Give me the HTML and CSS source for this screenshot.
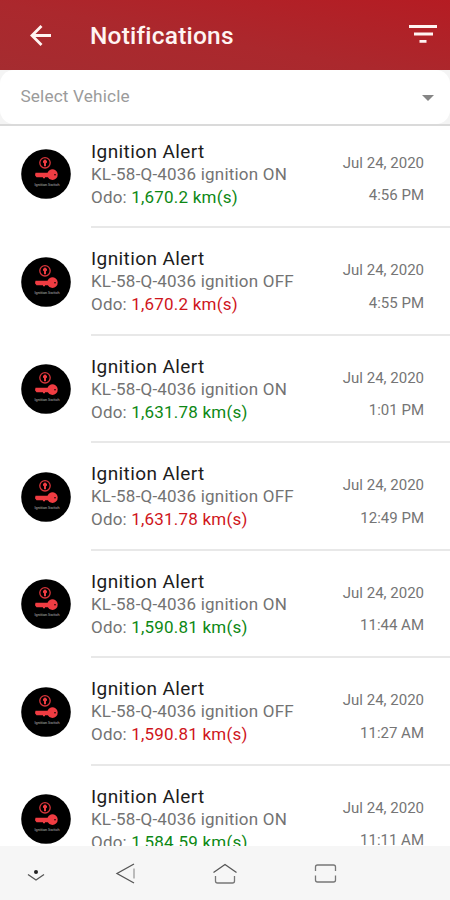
FILE: index.html
```
<!DOCTYPE html>
<html lang="en">
	<head>
		<meta charset="utf-8">
		<title>Notifications</title>
		<link rel="stylesheet" href="styles.css">
	</head>
	<body>
		<header class="topbar">
			<svg class="back" viewBox="0 0 24 24"><path d="M23 12.500H4M13.500 3L4 12.500l9.500 9.500"/></svg>
			<h1>Notifications</h1>
			<svg class="filter" viewBox="0 0 30 20"><path d="M1 2.500h28M6 10h19M11.500 17.300h7"/></svg>
		</header>
		<div class="vehicle-bar">
			<div class="vehicle-select">
				<span>Select Vehicle</span>
				<i class="caret"></i>
			</div>
		</div>
		<ul class="alerts" id="alerts"></ul>
		<nav class="navbar">
			<svg viewBox="0 0 24 24"><path d="M4 13.500l8 5.500 8-5.500"/><circle class="dot" cx="12" cy="11" r="2"/></svg>
			<svg viewBox="0 0 24 24"><path d="M21 3L4 12.500l17 9.500"/><path class="faint" d="M21 7.500v10"/></svg>
			<svg viewBox="0 0 24 24"><path d="M.5 11.500L12 3.500l11.500 8"/><path class="soft" d="M2.500 15V20q0 2 2 2h15q2 0 2-2v-5"/></svg>
			<svg viewBox="0 0 24 24"><path class="soft" d="M2.500 10V6q0-2 2-2h16q2 0 2 2v4M2.500 14.500V19q0 2 2 2h16q2 0 2-2v-4.500"/></svg>
		</nav>
		<script>
var alerts = [
	['ON', '1,670.2', '4:56 PM'],
	['OFF', '1,670.2', '4:55 PM'],
	['ON', '1,631.78', '1:01 PM'],
	['OFF', '1,631.78', '12:49 PM'],
	['ON', '1,590.81', '11:44 AM'],
	['OFF', '1,590.81', '11:27 AM'],
	['ON', '1,584.59', '11:11 AM']
];

var icon = '<svg class="avatar" viewBox="0 0 50 50">' +
	'<circle cx="25" cy="25" r="24.800"/>' +
	'<circle class="ring" cx="24" cy="13.800" r="5.200"/>' +
	'<path class="red" d="M22 12l2-1.700 2 1.700v1.500l-1 .8v3h-2v-3l-1-.8z"/>' +
	'<path class="red" d="M14.500 23.700h12a5.300 5.300 0 1 1 .3 4.500H24v1h-2v-1h-6.500l-1.500-2z"/>' +
	'<circle cx="34" cy="25.700" r=".8"/>' +
	'<text x="26" y="37" text-anchor="middle" textLength="25" lengthAdjust="spacingAndGlyphs">Ignition Switch</text></svg>';

function renderAlert(alert) {
	return '<li>' + icon + '<div class="row"><div class="info"><h2>Ignition Alert</h2>' +
		'<p>KL-58-Q-4036 ignition ' + alert[0] + '</p>' +
		'<p>Odo: <span class="' + alert[0].toLowerCase() + '">' + alert[1] + ' km(s)</span></p></div>' +
		'<div class="when"><span>Jul 24, 2020</span><span>' + alert[2] + '</span></div></div></li>';
}

document.getElementById('alerts').innerHTML = alerts.map(renderAlert).join('');
		</script>
	</body>
</html>
```
FILE: styles.css
```
* {
	box-sizing: border-box;
}

body {
	margin: 0;
	height: 900px;
	display: flex;
	flex-direction: column;
	overflow: hidden;
	background: #fff;
	font-family: Roboto, sans-serif;
}

h1, h2, p, ul {
	margin: 0;
	padding: 0;
}

svg {
	fill: none;
	flex: none;
}

.topbar {
	display: flex;
	align-items: center;
	height: 70px;
	padding: 0 12px 0 28px;
	background: linear-gradient(10deg, #a52c30, #ab282d 45%, #b51c23);
	color: #fff;
}

.topbar svg {
	stroke: #fff4f2;
	stroke-width: 2.8;
}

.back {
	width: 24px;
	height: 24px;
}

.topbar h1 {
	flex: 1;
	margin-left: 38px;
	font-size: 24.5px;
	font-weight: 500;
	letter-spacing: 0.2px;
	color: #fff4f2;
}

.filter {
	width: 30px;
	height: 20px;
	margin-bottom: 2px;
}

.vehicle-bar {
	height: 56px;
	flex: none;
	background: #f4f4f4;
	border-bottom: 2px solid #dadada;
}

.vehicle-select {
	display: flex;
	align-items: center;
	justify-content: space-between;
	height: 54px;
	padding: 0 16px 2px 20.5px;
	border-radius: 14px;
	background: #fff;
	color: #9b9b9b;
	font-size: 17.2px;
	letter-spacing: 0.15px;
}

.caret {
	margin-top: 4px;
	border: 6px solid transparent;
	border-top-color: #858585;
	border-bottom: 0;
}

.alerts {
	flex: 1;
	min-height: 0;
	overflow: hidden;
	list-style: none;
}

.alerts li {
	display: flex;
	height: 107.5px;
	padding-left: 20.5px;
}

/* the first row sits slightly under the vehicle bar */
.alerts li:first-child {
	margin-top: -5.3px;
}

.avatar {
	width: 50px;
	height: 50px;
	margin-top: 28.3px;
	fill: #000;
}

.avatar .ring {
	fill: none;
	stroke: #d8343a;
	stroke-width: 1.3;
}

.avatar .red {
	fill: #f03c42;
}

.avatar text {
	fill: #bbb;
	font-size: 4px;
}

.row {
	display: flex;
	flex: 1;
	justify-content: space-between;
	margin-left: 20.5px;
	padding: 19px 26px 0 0;
	border-bottom: 2px solid #e8e8e8;
}

.info h2 {
	font-size: 19px;
	font-weight: 400;
	line-height: 23px;
	letter-spacing: 0.4px;
	color: #1c1c1c;
}

.info p {
	font-size: 17px;
	line-height: 22.8px;
	letter-spacing: 0.2px;
	color: #737373;
}

.info .on {
	color: #0d8814;
}

.info .off {
	color: #cf151b;
}

.when {
	display: flex;
	flex-direction: column;
	align-items: flex-end;
	padding-top: 7px;
	font-size: 15px;
	line-height: 32.5px;
	color: #757575;
}

.navbar {
	display: grid;
	grid-template-columns: 75px 100px 100px 100px;
	flex: none;
	height: 54px;
	padding-bottom: 1px;
	align-items: center;
	justify-items: center;
	background: #f6f6f6;
}

.navbar svg {
	width: 24px;
	height: 24px;
	stroke: #555;
	stroke-width: 1.3;
}

.navbar svg:first-child {
	margin-right: 4px;
}

.navbar .dot {
	fill: #222;
	stroke: none;
}

.navbar .faint {
	stroke: #bbb;
	stroke-width: 2;
}

.navbar .soft {
	stroke: #777;
}
```
